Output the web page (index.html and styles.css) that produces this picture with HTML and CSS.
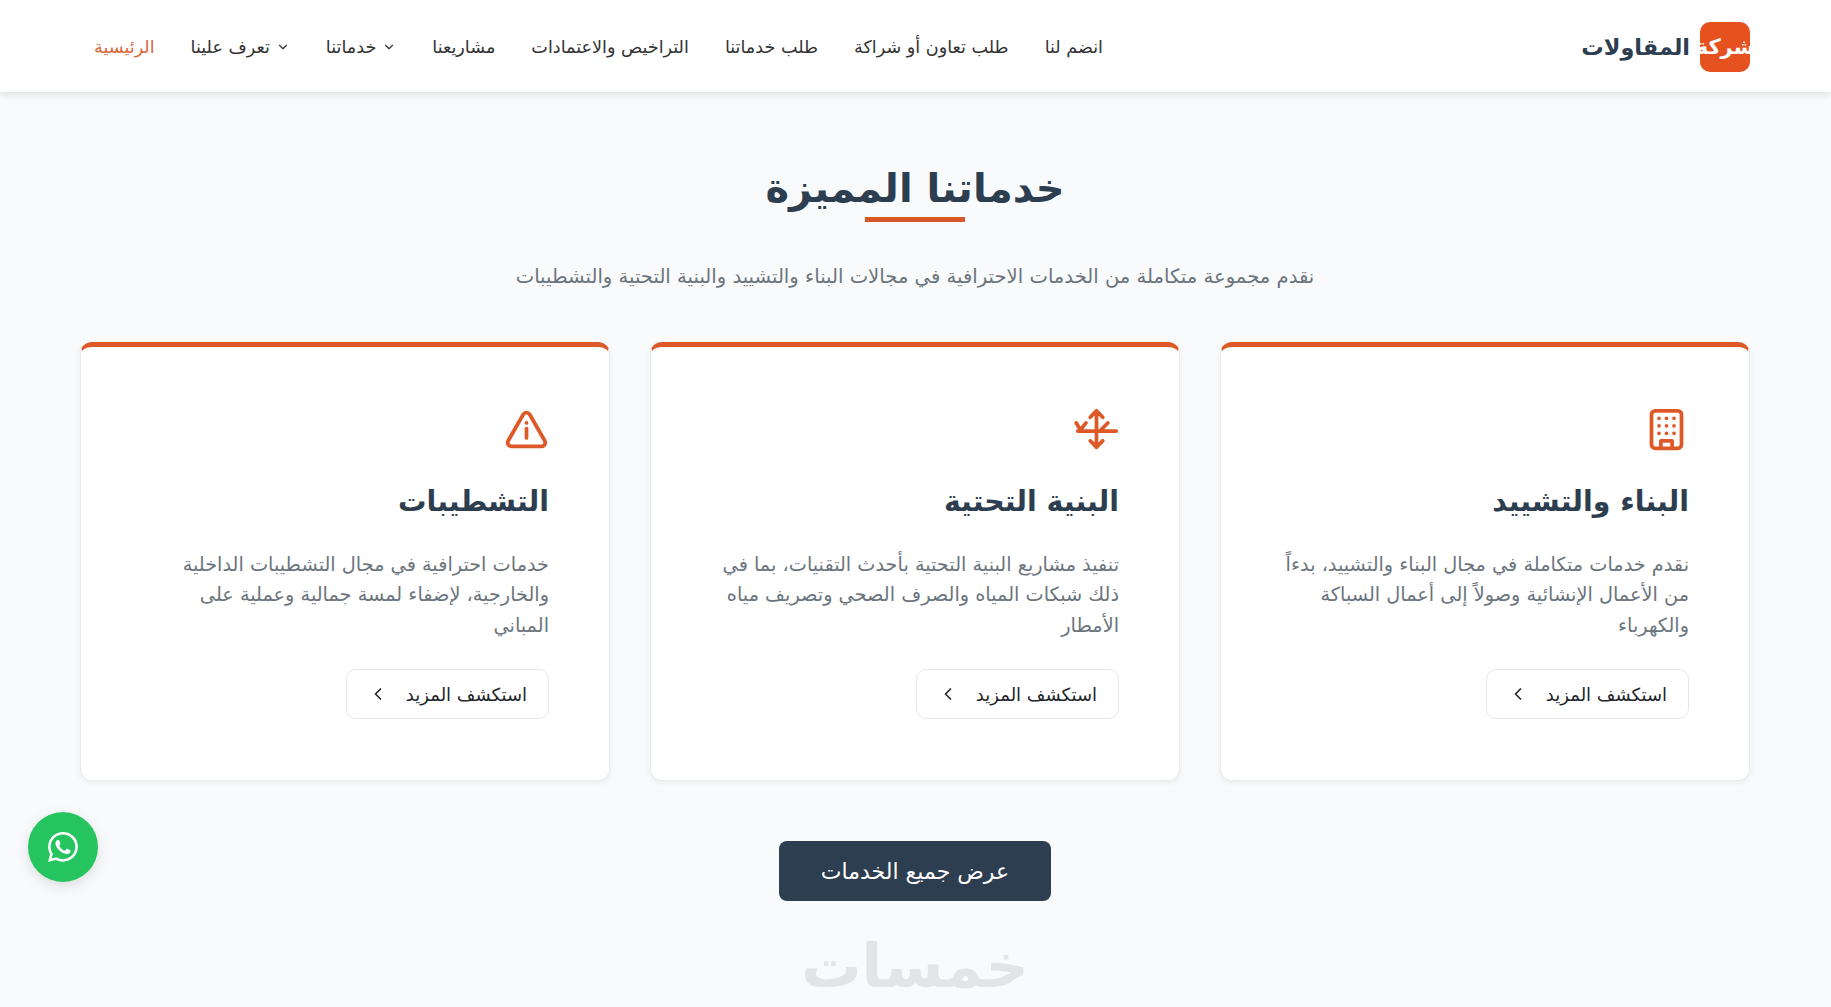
FILE: index.html
```html
<!DOCTYPE html>
<html lang="ar" dir="rtl">
<head>
  <meta charset="UTF-8" />
  <meta name="viewport" content="width=device-width, initial-scale=1.0" />
  <title>شركة المقاولات</title>
  <link rel="stylesheet" href="styles.css">
</head>
<body>
  <header class="navbar">
    <a class="brand" href="#">
      <span class="brand-box"><span class="brand-box-text">شركة</span></span>
      <span class="brand-name">المقاولات</span>
    </a>
    <nav class="nav-links">
      <a href="#">انضم لنا</a>
      <a href="#">طلب تعاون أو شراكة</a>
      <a href="#">طلب خدماتنا</a>
      <a href="#">التراخيص والاعتمادات</a>
      <a href="#">مشاريعنا</a>
      <a href="#"><svg class="caret" viewBox="0 0 24 24"><path d="m6 9 6 6 6-6"/></svg> خدماتنا</a>
      <a href="#"><svg class="caret" viewBox="0 0 24 24"><path d="m6 9 6 6 6-6"/></svg> تعرف علينا</a>
      <a class="active" href="#">الرئيسية</a>
    </nav>
  </header>

  <main class="services">
    <h1 class="section-title">خدماتنا المميزة</h1>
    <p class="section-sub">نقدم مجموعة متكاملة من الخدمات الاحترافية في مجالات البناء والتشييد والبنية التحتية والتشطيبات</p>

    <div class="cards">
      <article class="card">
        <svg class="card-icon" viewBox="0 0 24 24">
          <rect x="4" y="2" width="16" height="20" rx="2"/>
          <path d="M9 22v-4h6v4"/>
          <path d="M8 6h.01M12 6h.01M16 6h.01M8 10h.01M12 10h.01M16 10h.01M8 14h.01M12 14h.01M16 14h.01"/>
        </svg>
        <h2>البناء والتشييد</h2>
        <p>نقدم خدمات متكاملة في مجال البناء والتشييد، بدءاً من الأعمال الإنشائية وصولاً إلى أعمال السباكة والكهرباء</p>
        <a class="more-btn" href="#">استكشف المزيد <svg viewBox="0 0 24 24"><path d="m15 18-6-6 6-6"/></svg></a>
      </article>
      <article class="card">
        <svg class="card-icon" viewBox="0 0 24 24">
          <path d="M12 2v19.5M8.7 5.5 12 2l3.3 3.5M8.7 18l3.3 3.5 3.3-3.5M2 12.8h20.5M1.2 8.5l2.2 3.7 3-3.7M18 8.5l-4.2 4.3"/>
        </svg>
        <h2>البنية التحتية</h2>
        <p>تنفيذ مشاريع البنية التحتية بأحدث التقنيات، بما في ذلك شبكات المياه والصرف الصحي وتصريف مياه الأمطار</p>
        <a class="more-btn" href="#">استكشف المزيد <svg viewBox="0 0 24 24"><path d="m15 18-6-6 6-6"/></svg></a>
      </article>
      <article class="card">
        <svg class="card-icon" viewBox="0 0 24 24">
          <path d="m21.73 18-8-14a2 2 0 0 0-3.48 0l-8 14A2 2 0 0 0 4 21h16a2 2 0 0 0 1.73-3Z"/>
          <path d="M12 11.5v5M12 8.5h.01"/>
        </svg>
        <h2>التشطيبات</h2>
        <p>خدمات احترافية في مجال التشطيبات الداخلية والخارجية، لإضفاء لمسة جمالية وعملية على المباني</p>
        <a class="more-btn" href="#">استكشف المزيد <svg viewBox="0 0 24 24"><path d="m15 18-6-6 6-6"/></svg></a>
      </article>
    </div>

    <a class="all-btn" href="#">عرض جميع الخدمات</a>
    <div class="watermark">خمسات</div>
  </main>

  <a class="whatsapp" href="#">
    <svg viewBox="0 0 16 16"><path d="M13.601 2.326A7.854 7.854 0 0 0 7.994 0C3.627 0 .068 3.558.064 7.926c0 1.399.366 2.76 1.057 3.965L0 16l4.204-1.102a7.933 7.933 0 0 0 3.79.965h.004c4.368 0 7.926-3.558 7.93-7.93A7.898 7.898 0 0 0 13.6 2.326zM7.994 14.521a6.573 6.573 0 0 1-3.356-.92l-.24-.144-2.494.654.666-2.433-.156-.251a6.56 6.56 0 0 1-1.007-3.505c0-3.626 2.957-6.584 6.591-6.584a6.56 6.56 0 0 1 4.66 1.931 6.557 6.557 0 0 1 1.928 4.66c-.004 3.639-2.961 6.592-6.592 6.592zm3.615-4.934c-.197-.099-1.17-.578-1.353-.646-.182-.065-.315-.099-.445.099-.133.197-.513.646-.627.775-.114.133-.232.148-.43.05-.197-.1-.836-.308-1.592-.985-.59-.525-.985-1.175-1.103-1.372-.114-.198-.011-.304.088-.403.087-.088.197-.232.296-.346.1-.114.133-.198.198-.33.065-.134.034-.248-.015-.347-.05-.099-.445-1.076-.612-1.47-.16-.389-.323-.335-.445-.34-.114-.007-.247-.007-.38-.007a.729.729 0 0 0-.529.247c-.182.198-.691.677-.691 1.654 0 .977.71 1.916.81 2.049.098.133 1.394 2.132 3.383 2.992.47.205.84.326 1.129.418.475.152.904.129 1.246.08.38-.058 1.171-.48 1.338-.943.164-.464.164-.86.114-.943-.049-.084-.182-.133-.38-.232z"/></svg>
  </a>
</body>
</html>
```

FILE: styles.css
```css
* {
  margin: 0;
  padding: 0;
  box-sizing: border-box;
}
html, body {
  height: 1007px;
  overflow: hidden;
}
body {
  background-color: #f9fafb;
  color: #2c3e50;
  font-family: "DejaVu Sans", "Noto Sans", sans-serif;
}
a {
  text-decoration: none;
  color: inherit;
}
.navbar {
  height: 92px;
  padding: 2px 81px 0;
  display: flex;
  align-items: center;
  justify-content: space-between;
  background: #fff;
  box-shadow: 0 2px 8px rgba(0,0,0,0.12);
}
.brand {
  display: flex;
  align-items: center;
  gap: 10px;
}
.brand-box {
  width: 50px;
  height: 50px;
  background: #e6521f;
  border-radius: 10px;
  display: flex;
  align-items: center;
  justify-content: center;
  overflow: hidden;
}
.brand-box-text {
  color: #fff;
  font-size: 21px;
  font-weight: 700;
  white-space: nowrap;
}
.brand-name {
  font-size: 22.4px;
  font-weight: 700;
  color: #2c3e50;
}
.nav-links {
  display: flex;
  align-items: center;
  gap: 36px;
  padding-left: 13px;
}
.nav-links a {
  display: flex;
  align-items: center;
  gap: 6px;
  font-size: 17.6px;
  color: #333;
  white-space: nowrap;
}
.nav-links a.active {
  color: #d9683c;
}
.caret {
  width: 14px;
  height: 14px;
  fill: none;
  stroke: #333;
  stroke-width: 2;
  stroke-linecap: round;
  stroke-linejoin: round;
}
.services {
  padding: 68px 81px 0 80px;
  display: flex;
  flex-direction: column;
  align-items: center;
}
.section-title {
  position: relative;
  font-size: 40px;
  font-weight: 700;
  line-height: 56px;
  color: #2c3e50;
}
.section-title::after {
  content: "";
  position: absolute;
  left: 50%;
  bottom: -6px;
  width: 100px;
  height: 5px;
  margin-left: -50px;
  background: #d9582a;
}
.section-sub {
  margin-top: 46px;
  font-size: 19.6px;
  line-height: 30px;
  color: #6c757d;
}
.cards {
  width: 100%;
  margin-top: 50px;
  display: grid;
  grid-template-columns: repeat(3, 1fr);
  gap: 40px;
}
.card {
  height: 439px;
  padding: 60px 60px 0;
  background: #fff;
  border: 1px solid #e9ecef;
  border-top: 5px solid #dd5a28;
  border-radius: 12px;
  box-shadow: 0 2px 6px rgba(0,0,0,0.06);
}
.card-icon {
  display: block;
  width: 45px;
  height: 45px;
  fill: none;
  stroke: #dd5a28;
  stroke-width: 2;
  stroke-linecap: round;
  stroke-linejoin: round;
}
.card h2 {
  margin-top: 30px;
  font-size: 28.4px;
  font-weight: 700;
  line-height: 40px;
  color: #2c3e50;
}
.card p {
  margin-top: 28px;
  font-size: 19.3px;
  line-height: 30.4px;
  color: #6c757d;
}
.more-btn {
  margin-top: 28px;
  width: 203px;
  height: 50px;
  padding: 0 21px;
  display: flex;
  align-items: center;
  justify-content: space-between;
  font-size: 18px;
  color: #212529;
  border: 1px solid #e5e7eb;
  border-radius: 10px;
  background: #fff;
}
.more-btn svg {
  width: 20px;
  height: 20px;
  fill: none;
  stroke: #212529;
  stroke-width: 2;
  stroke-linecap: round;
  stroke-linejoin: round;
}
.all-btn {
  margin-top: 60px;
  width: 272px;
  height: 60px;
  display: flex;
  align-items: center;
  justify-content: center;
  font-size: 22px;
  font-weight: 500;
  color: #fff;
  background: #2c3e50;
  border-radius: 8px;
}
.watermark {
  margin-top: 30px;
  font-size: 60px;
  line-height: 70px;
  font-weight: 700;
  color: #e3e4e6;
}
.whatsapp {
  position: fixed;
  left: 28px;
  bottom: 125px;
  width: 70px;
  height: 70px;
  border-radius: 50%;
  display: flex;
  align-items: center;
  justify-content: center;
  background: #25c45f;
  box-shadow: 0 4px 14px rgba(0,0,0,0.12);
}
.whatsapp svg {
  width: 30px;
  height: 30px;
  fill: #fff;
}
```
